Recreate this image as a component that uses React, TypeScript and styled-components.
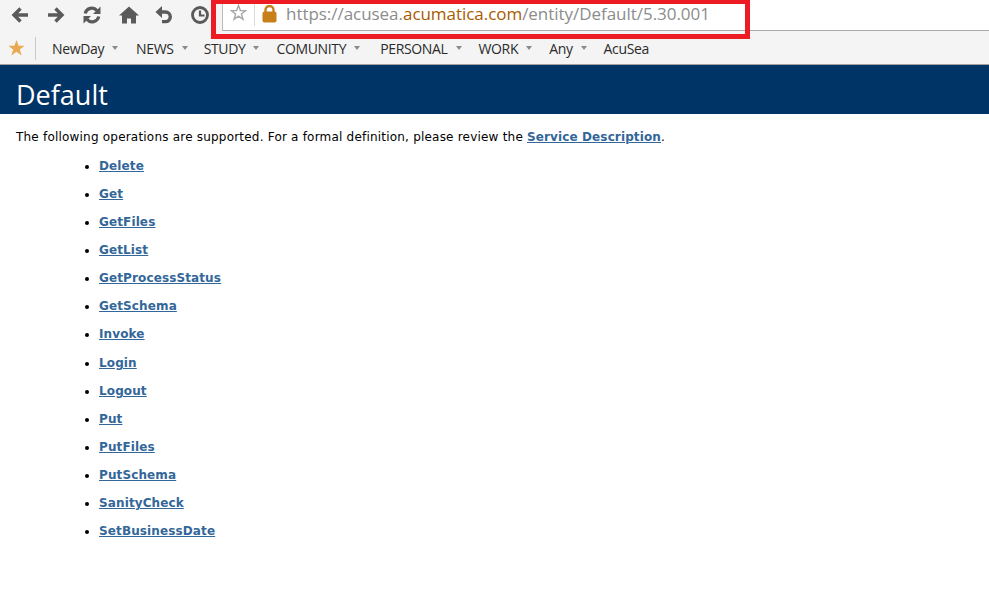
import React from "react";
import styled, { createGlobalStyle } from "styled-components";

const Global = createGlobalStyle`
  html, body { margin: 0; padding: 0; background: #fff; overflow: hidden; }
  #root { width: 989px; height: 595px; position: relative; overflow: hidden; }
`;

const Page = styled.div`
  width: 989px;
  height: 595px;
  position: relative;
  background: #fff;
`;

const Chrome = styled.div`
  background: #f4f4f4;
  border-bottom: 1px solid #a0a0a0;
  height: 64px;
  display: flex;
  flex-direction: column;
`;

const TopRow = styled.div`
  display: flex;
  height: 31px;
`;

const NavIcons = styled.div`
  display: flex;
  width: 222px;
  flex: none;
  padding: 5px 0 0 11px;
  box-sizing: border-box;
`;

const NavSlot = styled.div`
  width: 36px;
  height: 20px;
  flex: none;
  display: flex;
  justify-content: flex-start;
  align-items: center;
`;

const AddressBar = styled.div`
  flex: 1;
  background: #fff;
  border-left: 1px solid #bdbdbd;
  border-bottom: 1px solid #a9a9a9;
  display: flex;
  align-items: center;
  height: 31px;
  box-sizing: border-box;
`;

const StarCell = styled.div`
  width: 32px;
  height: 26px;
  flex: none;
  display: flex;
  align-items: center;
  justify-content: center;
  border-right: 1px solid #d9d9d9;
  box-sizing: border-box;
  margin-top: -5px;
`;

const LockCell = styled.div`
  width: 31px;
  flex: none;
  display: flex;
  align-items: center;
  padding-left: 7px;
  box-sizing: border-box;
  margin-top: -3px;
`;

const Url = styled.div`
  font: 17px "Open Sans", "Noto Sans", sans-serif;
  color: #8c8c8c;
  white-space: nowrap;
  margin-top: -3px;
  letter-spacing: -0.04px;
`;

const Domain = styled.span`
  color: #a85a00;
`;

const BookmarkRow = styled.div`
  height: 33px;
  display: flex;
  align-items: center;
  padding: 1px 0 0 8px;
  box-sizing: border-box;
`;

const BookmarkStar = styled.div`
  width: 27px;
  flex: none;
  display: flex;
`;

const Divider = styled.div`
  width: 1px;
  height: 23px;
  background: #c8c8c8;
  flex: none;
  margin-right: 16px;
`;

const Bookmark = styled.div<{ $gap: number }>`
  font: 14px "Open Sans", "Noto Sans", sans-serif;
  letter-spacing: -0.35px;
  color: #2b2b2b;
  display: flex;
  align-items: center;
  margin-right: ${(p) => p.$gap}px;
  white-space: nowrap;
`;

const Caret = styled.span`
  width: 0;
  height: 0;
  border-left: 3.5px solid transparent;
  border-right: 3.5px solid transparent;
  border-top: 4px solid #8a8a8a;
  margin-left: 8px;
  margin-top: -1px;
`;

const Banner = styled.header`
  background: #003366;
  height: 49px;
  padding-left: 16px;
  box-sizing: border-box;
`;

const Title = styled.h1`
  margin: 0;
  color: #fff;
  font: 500 27px/60px "Open Sans", "Noto Sans", sans-serif;
  height: 49px;
  overflow: hidden;
`;

const Content = styled.main`
  padding: 15px 0 0 16px;
  font: 12px/16px "DejaVu Sans", Verdana, sans-serif;
  color: #000;
`;

const Intro = styled.p`
  margin: 0;
  letter-spacing: 0.205px;
`;

const Link = styled.a`
  font-weight: 700;
  color: #336699;
  text-decoration: underline;
  font-size: 12px;
  letter-spacing: 0.12px;
`;

const Ops = styled.ul`
  list-style: disc;
  margin: 0;
  padding: 10.6px 0 0 83px;
`;

const Op = styled.li`
  height: 28.15px;
  line-height: 20px;
`;

const Frame = styled.div`
  position: absolute;
  left: 211px;
  top: -1px;
  width: 539px;
  height: 40px;
  border: 5px solid #ed1c24;
  box-sizing: border-box;
  pointer-events: none;
`;

const IconSvg = styled.svg`
  display: block;
`;

const NAV = "#5a5a5a";

const Back = () => (
  <IconSvg width="18" height="18" viewBox="0 0 18 18" fill="none" stroke={NAV} strokeWidth="3.4">
    <path d="M3 9h14M9.5 2.5 3 9l6.5 6.5" />
  </IconSvg>
);
const Forward = () => (
  <IconSvg width="18" height="18" viewBox="0 0 18 18" fill="none" stroke={NAV} strokeWidth="3.4">
    <path d="M15 9H1M8.5 2.5 15 9l-6.5 6.5" />
  </IconSvg>
);
const Reload = () => (
  <IconSvg width="18" height="18" viewBox="0 0 18 18" fill="none">
    <path d="M2.2 7.5A6.8 6.8 0 0 1 14 4.6" stroke={NAV} strokeWidth="3.2" />
    <path d="M15.8 10.5A6.8 6.8 0 0 1 4 13.4" stroke={NAV} strokeWidth="3.2" />
    <path d="M17.5 0.5v7.5h-7.5zM0.5 17.5v-7.5h7.5z" fill={NAV} />
  </IconSvg>
);
const Home = () => (
  <IconSvg width="20" height="18" viewBox="0 0 20 18">
    <path d="M10 0.5 0 9.5h3V17.5h5v-5h4v5h5V9.5h3z" fill={NAV} />
  </IconSvg>
);
const Undo = () => (
  <IconSvg width="18" height="18" viewBox="0 0 18 18" fill="none">
    <path d="M4 6h6.5a4.8 4.8 0 0 1 0 9.6H7" stroke={NAV} strokeWidth="3.4" />
    <path d="M0.5 6l6.5-6v12z" fill={NAV} />
  </IconSvg>
);
const Clock = () => (
  <IconSvg width="18" height="18" viewBox="0 0 18 18" fill="none" stroke={NAV}>
    <circle cx="9" cy="9" r="7.5" strokeWidth="2.8" />
    <path d="M9 4.5V9.5H13.5" strokeWidth="2.2" />
  </IconSvg>
);
const HollowStar = () => (
  <IconSvg width="17" height="17" viewBox="0 0 17 17">
    <path d="M8.5 1.5 10.4 6.6h5.3l-4.3 3.3 1.6 5.4-4.5-3.2-4.5 3.2 1.6-5.4L1.3 6.6h5.3z" fill="none" stroke="#a8a8a8" strokeWidth="1.4" />
  </IconSvg>
);
const Lock = () => (
  <IconSvg width="15" height="18" viewBox="0 0 15 18">
    <path d="M3.5 8V5a4 4 0 0 1 8 0v3" fill="none" stroke="#c77f1a" strokeWidth="2.4" />
    <rect x="0.5" y="6.5" width="14" height="11" rx="2" fill="#c77f1a" />
  </IconSvg>
);
const GoldStar = () => (
  <IconSvg width="17" height="16" viewBox="0 0 17 16">
    <path d="M8.5 0 10.6 5.7h6l-4.8 3.7 1.8 6-5.1-3.6-5.1 3.6 1.8-6L.4 5.7h6z" fill="#e8a951" />
  </IconSvg>
);

const navIcons = [Back, Forward, Reload, Home, Undo, Clock];

const bookmarks: { label: string; caret: boolean; gap: number }[] = [
  { label: "NewDay", caret: true, gap: 18 },
  { label: "NEWS", caret: true, gap: 16 },
  { label: "STUDY", caret: true, gap: 17 },
  { label: "COMUNITY", caret: true, gap: 20 },
  { label: "PERSONAL", caret: true, gap: 17 },
  { label: "WORK", caret: true, gap: 17 },
  { label: "Any", caret: true, gap: 17 },
  { label: "AcuSea", caret: false, gap: 0 },
];

const operations = [
  "Delete", "Get", "GetFiles", "GetList", "GetProcessStatus", "GetSchema", "Invoke",
  "Login", "Logout", "Put", "PutFiles", "PutSchema", "SanityCheck", "SetBusinessDate",
];

export default function App() {
  return (
    <Page>
      <Global />
      <Chrome>
        <TopRow>
          <NavIcons>
            {navIcons.map((Icon, i) => (
              <NavSlot key={i}>
                <Icon />
              </NavSlot>
            ))}
          </NavIcons>
          <AddressBar>
            <StarCell>
              <HollowStar />
            </StarCell>
            <LockCell>
              <Lock />
            </LockCell>
            <Url>
              https://acusea.<Domain>acumatica.com</Domain>/entity/Default/5.30.001
            </Url>
          </AddressBar>
        </TopRow>
        <BookmarkRow>
          <BookmarkStar>
            <GoldStar />
          </BookmarkStar>
          <Divider />
          {bookmarks.map((b) => (
            <Bookmark key={b.label} $gap={b.gap}>
              {b.label}
              {b.caret && <Caret />}
            </Bookmark>
          ))}
        </BookmarkRow>
      </Chrome>
      <Banner>
        <Title>Default</Title>
      </Banner>
      <Content>
        <Intro>
          The following operations are supported. For a formal definition, please review the{" "}
          <Link href="#">Service Description</Link>.
        </Intro>
        <Ops>
          {operations.map((op) => (
            <Op key={op}>
              <Link href="#">{op}</Link>
            </Op>
          ))}
        </Ops>
      </Content>
      <Frame />
    </Page>
  );
}
